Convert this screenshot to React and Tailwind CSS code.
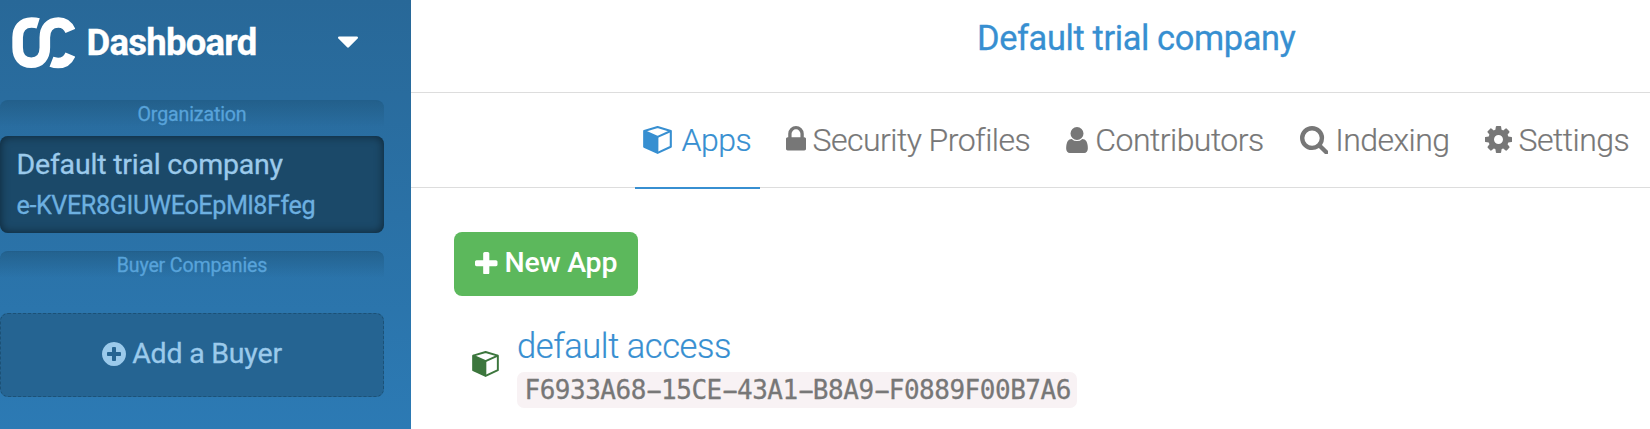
const PATHS = {
  lock: ["320 128 1152 1408", "M640 768h512v-192q0-106-75-181t-181-75-181 75-75 181v192zm832 96v576q0 40-28 68t-68 28h-960q-40 0-68-28t-28-68v-576q0-40 28-68t68-28h32v-192q0-184 132-316t316-132 316 132 132 316v192h32q40 0 68 28t28 68z"],
  user: ["256 128 1280 1536", "M1536 1399q0 109-62.5 187t-150.5 78h-854q-88 0-150.5-78t-62.5-187q0-85 8.5-160.5t31.5-152 58.5-131 94-89 134.5-34.5q131 128 313 128t313-128q76 0 134.5 34.5t94 89 58.5 131 31.5 152 8.5 160.5zm-256-887q0 159-112.5 271.5t-271.5 112.5-271.5-112.5-112.5-271.5 112.5-271.5 271.5-112.5 271.5 112.5 112.5 271.5z"],
  search: ["64 128 1664 1664", "M1216 832q0-185-131.5-316.5t-316.5-131.5-316.5 131.5-131.5 316.5 131.5 316.5 316.5 131.5 316.5-131.5 131.5-316.5zm512 832q0 52-38 90t-90 38q-54 0-90-38l-343-342q-179 124-399 124-143 0-273.5-55.5t-225-150-150-225-55.5-273.5 55.5-273.5 150-225 225-150 273.5-55.5 273.5 55.5 225 150 150 225 55.5 273.5q0 220-124 399l343 343q37 37 37 90z"],
  cog: ["128 128 1536 1536", "M1152 896q0-106-75-181t-181-75-181 75-75 181 75 181 181 75 181-75 75-181zm512-109v222q0 12-8 23t-20 13l-185 28q-19 54-39 91 35 50 107 138 10 12 10 25t-9 23q-27 37-99 108t-94 71q-12 0-26-9l-138-108q-44 23-91 38-16 136-29 186-7 28-36 28h-222q-14 0-24.5-8.5t-11.5-21.5l-28-184q-49-16-90-37l-141 107q-10 9-25 9-14 0-25-11-126-114-165-168-7-10-7-23 0-12 8-23 15-21 51-66.5t54-70.5q-27-50-41-99l-183-27q-13-2-21-12.5t-8-23.5v-222q0-12 8-23t19-13l186-28q14-46 39-92-40-57-107-138-10-12-10-24 0-10 9-23 26-36 98.5-107.5t94.5-71.5q13 0 26 10l138 107q44-23 91-38 16-136 29-186 7-28 36-28h222q14 0 24.5 8.5t11.5 21.5l28 184q49 16 90 37l142-107q9-9 24-9 13 0 25 10 129 119 165 170 7 8 7 22 0 12-8 23-15 21-51 66.5t-54 70.5q26 50 41 98l183 28q13 2 21 12.5t8 23.5z"],
  plus: ["192 128 1408 1408", "M1600 736v192q0 40-28 68t-68 28h-416v416q0 40-28 68t-68 28h-192q-40 0-68-28t-28-68v-416h-416q-40 0-68-28t-28-68v-192q0-40 28-68t68-28h416v-416q0-40 28-68t68-28h192q40 0 68 28t28 68v416h416q40 0 68 28t28 68z"],
  plusCircle: ["128 128 1536 1536", "M1344 960v-128q0-26-19-45t-45-19h-256v-256q0-26-19-45t-45-19h-128q-26 0-45 19t-19 45v256h-256q-26 0-45 19t-19 45v128q0 26 19 45t45 19h256v256q0 26 19 45t45 19h128q26 0 45-19t19-45v-256h256q26 0 45-19t19-45zm320-64q0 209-103 385.5t-279.5 279.5-385.5 103-385.5-103-279.5-279.5-103-385.5 103-385.5 279.5-279.5 385.5-103 385.5 103 279.5 279.5 103 385.5z"],
  caret: ["384 640 1024 576", "M1408 704q0 26-19 45l-448 448q-19 19-45 19t-45-19l-448-448q-19-19-19-45t19-45 45-19h896q26 0 45 19t19 45z"],
};

function Icon({ name, className }) {
  const [viewBox, d] = PATHS[name];
  return (
    <svg viewBox={viewBox} className={`block shrink-0 fill-current ${className}`} aria-hidden="true">
      <path d={d} />
    </svg>
  );
}

function Cube({ className }) {
  return (
    <svg viewBox="0 0 29 28" className={`block shrink-0 ${className}`} aria-hidden="true">
      <path
        d="M14.6 1.1 27.8 5V20.7L14.6 26.9 1.2 20.7V5Z"
        fill="none"
        stroke="currentColor"
        strokeWidth="2.1"
        strokeLinejoin="round"
      />
      <path d="M1 5 15.4 10.8V27L1 20.7Z" fill="currentColor" />
      <path d="M1.2 5 14.6 10.8 27.8 5" fill="none" stroke="currentColor" strokeWidth="2" strokeLinejoin="round" />
    </svg>
  );
}

function Logo() {
  return (
    <svg viewBox="0 0 190 155" className="block h-[51.5px] w-[63px] shrink-0" fill="none" stroke="#fff" strokeWidth="32" aria-hidden="true">
      <path d="M79 19Q71 16.5 59 16.5C31 16.5 17 35 17 62V92C17 119 31 138 58 138C85 138 99 119 99 92V62C99 35 113 16.5 140 16.5C158 16.5 169 26 176 42" />
      <path d="M119 135Q128 138.5 139 138.5C158 138.5 169 129 176 113" />
    </svg>
  );
}

function GroupLabel({ children, className = "" }) {
  return (
    <div
      className={`h-[27px] w-[384px] rounded-t-lg border-t border-[#225f8b] bg-linear-to-b from-[#1f587f]/60 to-transparent text-center text-[19.6px] leading-[28px] tracking-[-0.15px] text-[#58a3da] [-webkit-text-stroke:0.3px] ${className}`}
    >
      {children}
    </div>
  );
}

function Tab({ icon, label, className }) {
  return (
    <div className={`flex shrink-0 items-center ${className}`}>
      {icon}
      <span>{label}</span>
    </div>
  );
}

const APP_ID = "F6933A68-15CE-43A1-B8A9-F0889F00B7A6";

function AppId() {
  return (
    <code className="flex h-9 w-[560px] items-center rounded-[7px] bg-[#f8f2f4] pl-[7.5px] font-['DejaVu_Sans_Mono',monospace] text-[26px] leading-[38px] tracking-[-0.48px] text-[#777] [-webkit-text-stroke:0.3px]">
      {APP_ID.split(/(-)/).map((part, i) => (
        <span key={i} className={part === "-" ? "inline-block scale-x-[1.9]" : "inline-block"}>
          {part}
        </span>
      ))}
    </code>
  );
}

export default function App() {
  return (
    <div className="flex h-[429px] w-[1650px] overflow-hidden bg-white font-['Roboto',sans-serif]">
      <aside className="flex w-[411px] shrink-0 flex-col bg-linear-to-b from-[#286898] to-[#2c7ab4]">
        <div className="flex h-[100px] items-start pl-3 text-white">
          <div className="pt-[17px]">
            <Logo />
          </div>
          <div className="ml-[11.5px] w-[171.5px] text-[36.5px] leading-[85px] font-bold tracking-[-0.75px] [-webkit-text-stroke:0.3px]">
            Dashboard
          </div>
          <Icon name="caret" className="mt-[36px] ml-[80px] h-[12px] w-[20px]" />
        </div>

        <GroupLabel>Organization</GroupLabel>

        <div className="mt-[9px] h-[97px] w-[384px] rounded-lg bg-[#1b4969] pt-[8px] pl-[16.5px] shadow-[inset_0_0_10px_rgba(0,0,0,0.5)] [-webkit-text-stroke:0.3px]">
          <div className="text-[28.5px] leading-[41px] tracking-[-0.2px] text-[#9bcaeb]">Default trial company</div>
          <div className="text-[25.2px] leading-[41px] tracking-[-0.42px] text-[#6db0e0]">e-KVER8GIUWEoEpMl8Ffeg</div>
        </div>

        <GroupLabel className="mt-[18px]">Buyer Companies</GroupLabel>

        <div className="mt-[35px] flex h-[84px] w-[384px] items-center justify-center rounded-lg border border-dashed border-[#1c5176] bg-[#256492] pb-[2px] text-[28.5px] tracking-[-0.2px] text-[#9bcaeb] [-webkit-text-stroke:0.3px]">
          <Icon name="plusCircle" className="mr-[6px] size-6" />
          <span>Add a Buyer</span>
        </div>
      </aside>

      <main className="flex flex-1 flex-col overflow-hidden">
        <header className="h-[93px] border-b border-[#ddd] pl-[566px] text-[34.4px] leading-[77px] tracking-[-0.38px] text-[#378fd1] [-webkit-text-stroke:0.3px]">
          Default trial company
        </header>

        <nav className="flex h-[95px] border-b border-[#ddd] pl-[224px] text-[32px] leading-[95px] font-light tracking-[-0.53px] text-[#777] [-webkit-text-stroke:0.2px]">
          <Tab
            icon={<Cube className="mr-[9.5px] h-[28px] w-[29px]" />}
            label="Apps"
            className="h-[96px] w-[125px] border-b-2 border-[#378fd1] pl-2 text-[#378fd1]"
          />
          <Tab icon={<Icon name="lock" className="mb-[3px] mr-[6.5px] h-[24.5px] w-[20px]" />} label="Security Profiles" className="ml-[26px]" />
          <Tab icon={<Icon name="user" className="mb-[1px] mr-[6.5px] h-[26px] w-[24px]" />} label="Contributors" className="ml-[34.5px]" />
          <Tab icon={<Icon name="search" className="mr-[7px] size-[28.5px]" />} label="Indexing" className="ml-[36px]" />
          <Tab icon={<Icon name="cog" className="mb-[1px] mr-[7px] size-[27px]" />} label="Settings" className="ml-[35px]" />
        </nav>

        <section className="pt-[44px] pl-[43px]">
          <button className="flex h-16 w-[184px] items-center rounded-lg bg-[#5cb85c] pb-[2px] pl-[21px] text-[28.5px] leading-[62px] font-medium tracking-[-0.25px] text-white">
            <Icon name="plus" className="mr-[7px] size-[22.5px]" />
            <span>New App</span>
          </button>

          <div className="mt-[30px] flex">
            <Cube className="mt-[25px] ml-[17.5px] h-[26px] w-[27px] text-[#3c763d]" />
            <div className="ml-[18.5px]">
              <div className="h-[46px] text-[34.5px] leading-[41px] font-light tracking-[-0.42px] text-[#378fd1] [-webkit-text-stroke:0.2px]">
                default access
              </div>
              <AppId />
            </div>
          </div>
        </section>
      </main>
    </div>
  );
}
